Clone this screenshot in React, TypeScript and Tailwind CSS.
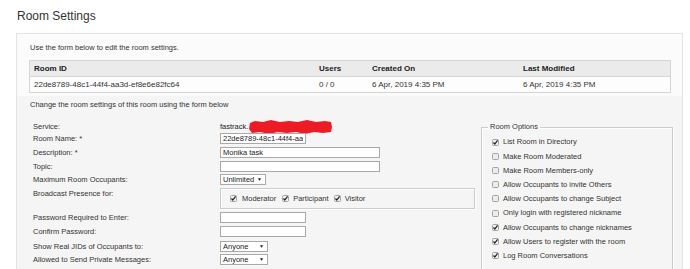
import React from 'react';

const Box = ({ checked }: { checked?: boolean }) => (
  <svg width="7" height="7" viewBox="0 0 7 7" className="shrink-0">
    <rect x="0.5" y="0.5" width="6" height="6" rx="1" fill={checked ? '#f2f2f2' : '#ececec'} stroke="#a3a3a3" />
    {checked && <path d="M1.5 3.5 L2.8 5 L5.6 1.4" fill="none" stroke="#1f1f1f" strokeWidth="1.2" />}
  </svg>
);

const FakeSelect = ({ value, width }: { value: string; width: string }) => (
  <div className={`${width} h-[11px] border border-[#a9a9a9] bg-white flex items-center justify-between pl-[2px] pr-[3px] text-[7.5px] leading-[9px] text-[#222]`}>
    <span>{value}</span>
    <span className="text-[5px]">▼</span>
  </div>
);

const options = [
  { label: 'List Room in Directory', checked: true },
  { label: 'Make Room Moderated', checked: false },
  { label: 'Make Room Members-only', checked: false },
  { label: 'Allow Occupants to invite Others', checked: false },
  { label: 'Allow Occupants to change Subject', checked: false },
  { label: 'Only login with registered nickname', checked: false },
  { label: 'Allow Occupants to change nicknames', checked: true },
  { label: 'Allow Users to register with the room', checked: true },
  { label: 'Log Room Conversations', checked: true },
];

const inputCls = 'h-[11px] border border-[#a9a9a9] bg-white px-[2px] py-0 text-[7.5px] leading-[9px] text-[#222] outline-none';

export default function App() {
  return (
    <div className="w-[690px] h-[269px] overflow-hidden bg-white font-['Liberation_Sans',Arial,sans-serif] text-[#333]">
      <h1 className="pt-[9px] pl-[17px] text-[12px] leading-[14px] font-normal text-[#333]">Room Settings</h1>

      <div className="mt-[10px] ml-[16px] w-[667px] border border-[#e4e4e4] bg-[#fbfbfb]">
        {/* room summary */}
        <div className="pt-[9px] pb-[3px]">
          <p className="pl-[13px] text-[7.5px] leading-[10px]">Use the form below to edit the room settings.</p>
          <div className="mt-[7px] ml-[12px] w-[642px] border border-[#d6d6d6] text-[8px]">
            <div className="grid grid-cols-[285px_53px_151px_1fr] h-[16px] items-center bg-[#ebebeb] border-b border-[#d6d6d6] font-bold text-[#222]">
              <span className="pl-[4px]">Room ID</span>
              <span className="pl-[4px]">Users</span>
              <span className="pl-[4px]">Created On</span>
              <span className="pl-[4px]">Last Modified</span>
            </div>
            <div className="grid grid-cols-[285px_53px_151px_1fr] h-[15px] items-center bg-[#fdfdfd] text-[#333]">
              <span className="pl-[4px]">22de8789-48c1-44f4-aa3d-ef8e6e82fc64</span>
              <span className="pl-[4px]">0 / 0</span>
              <span className="pl-[4px]">6 Apr, 2019 4:35 PM</span>
              <span className="pl-[4px]">6 Apr, 2019 4:35 PM</span>
            </div>
          </div>
        </div>

        {/* edit form */}
        <div className="bg-[#f5f5f5] pt-[4px] pl-[13px] pb-[10px] text-[7.5px]">
          <p className="leading-[10px]">Change the room settings of this room using the form below</p>

          <div className="mt-[10px] flex gap-[5px]">
            <div className="w-[446px] pl-[3px] leading-[10px]">
              <div className="flex h-[13px] items-center">
                <span className="w-[187px]">Service:</span>
                <span className="flex items-center text-[#222]">
                  fastrack.
                  <svg width="83" height="14" viewBox="0 0 83 14" className="ml-[1px]">
                    <polygon
                      points="1,3 6,1 14,2 22,0 31,2 40,1 49,2 58,0 67,2 76,1 82,2 83,7 82,12 74,13 65,12 56,14 47,12 38,13 29,12 20,14 11,12 3,13 0,9"
                      fill="#ed1c24"
                    />
                  </svg>
                </span>
              </div>
              <div className="flex h-[14px]">
                <span className="w-[187px] leading-[11px]">Room Name: *</span>
                <input readOnly value="22de8789-48c1-44f4-aa3d-ef8e6e82fc64" className={`${inputCls} w-[86px] px-[1px]`} />
              </div>
              <div className="flex h-[14px]">
                <span className="w-[187px] leading-[11px]">Description: *</span>
                <input readOnly value="Monika task" className={`${inputCls} w-[160px]`} />
              </div>
              <div className="flex h-[13px]">
                <span className="w-[187px] leading-[11px]">Topic:</span>
                <input readOnly value="" className={`${inputCls} w-[160px]`} />
              </div>
              <div className="flex h-[14px]">
                <span className="w-[187px] leading-[11px]">Maximum Room Occupants:</span>
                <FakeSelect value="Unlimited" width="w-[46px]" />
              </div>
              <div className="flex h-[24px]">
                <span className="w-[187px] leading-[11px]">Broadcast Presence for:</span>
                <div className="w-[255px] h-[21px] border border-[#cdcdcd] shadow-[inset_1px_1px_0_#fff,1px_1px_0_#fff] flex items-center pl-[9px] text-[#333]">
                  <Box checked />
                  <span className="ml-[5px]">Moderator</span>
                  <span className="ml-[6px]"><Box checked /></span>
                  <span className="ml-[4px]">Participant</span>
                  <span className="ml-[5px]"><Box checked /></span>
                  <span className="ml-[4px]">Visitor</span>
                </div>
              </div>
              <div className="flex h-[14px]">
                <span className="w-[187px] leading-[11px]">Password Required to Enter:</span>
                <input readOnly value="" className={`${inputCls} w-[86px]`} />
              </div>
              <div className="flex h-[15px]">
                <span className="w-[187px] leading-[11px]">Confirm Password:</span>
                <input readOnly value="" className={`${inputCls} w-[86px]`} />
              </div>
              <div className="flex h-[13px]">
                <span className="w-[187px] leading-[11px]">Show Real JIDs of Occupants to:</span>
                <FakeSelect value="Anyone" width="w-[48px]" />
              </div>
              <div className="flex h-[11px]">
                <span className="w-[187px] leading-[11px]">Allowed to Send Private Messages:</span>
                <FakeSelect value="Anyone" width="w-[48px]" />
              </div>
            </div>

            <fieldset className="mt-[2px] w-[192px] border border-[#cdcdcd] shadow-[inset_1px_1px_0_#fff,1px_1px_0_#fff] pl-[6px] pb-[6px]">
              <legend className="px-[2px] leading-[10px] text-[#333]">Room Options</legend>
              <div className="pt-[3px] pl-[4px]">
                {options.map((o) => (
                  <div key={o.label} className="flex h-[14.2px] items-center">
                    <Box checked={o.checked} />
                    <span className="ml-[4px]">{o.label}</span>
                  </div>
                ))}
              </div>
            </fieldset>
          </div>
        </div>
      </div>
    </div>
  );
}
